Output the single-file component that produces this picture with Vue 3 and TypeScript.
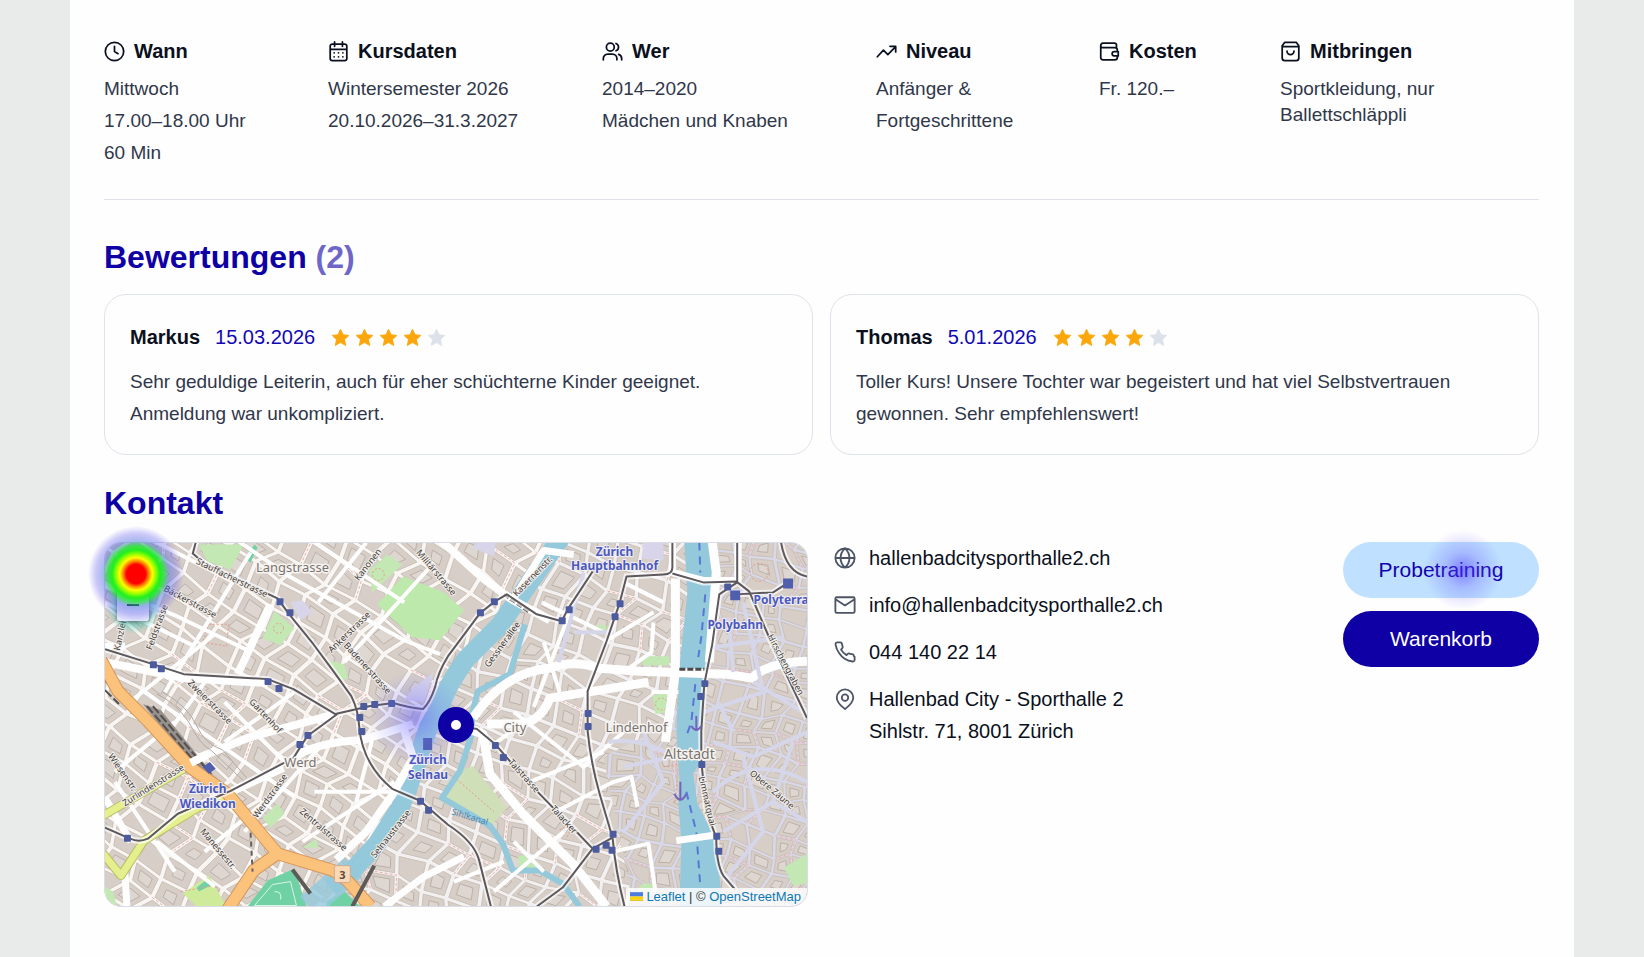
<script setup lang="ts">
interface Fact {
  icon: string
  title: string
  lines: string[]
  compact?: boolean
}

interface Review {
  name: string
  date: string
  stars: number
  text: string
}

interface Label {
  x: number
  y: number
  text: string
  angle?: number
}

const facts: Fact[] = [
  { icon: 'clock', title: 'Wann', lines: ['Mittwoch', '17.00–18.00 Uhr', '60 Min'] },
  { icon: 'calendar', title: 'Kursdaten', lines: ['Wintersemester 2026', '20.10.2026–31.3.2027'] },
  { icon: 'users', title: 'Wer', lines: ['2014–2020', 'Mädchen und Knaben'] },
  { icon: 'trend', title: 'Niveau', lines: ['Anfänger &', 'Fortgeschrittene'] },
  { icon: 'wallet', title: 'Kosten', lines: ['Fr. 120.–'] },
  { icon: 'bag', title: 'Mitbringen', lines: ['Sportkleidung, nur', 'Ballettschläppli'], compact: true },
]

const reviews: Review[] = [
  {
    name: 'Markus',
    date: '15.03.2026',
    stars: 4,
    text: 'Sehr geduldige Leiterin, auch für eher schüchterne Kinder geeignet. Anmeldung war unkompliziert.',
  },
  {
    name: 'Thomas',
    date: '5.01.2026',
    stars: 4,
    text: 'Toller Kurs! Unsere Tochter war begeistert und hat viel Selbstvertrauen gewonnen. Sehr empfehlenswert!',
  },
]

const icons: Record<string, string> = {
  clock: 'M12 1.5a10.5 10.5 0 1 0 0 21a10.5 10.5 0 1 0 0-21M12 6v6l4 2.5',
  calendar:
    'M5 3.5h14a2.5 2.5 0 0 1 2.5 2.5v14a2.5 2.5 0 0 1-2.5 2.5H5a2.5 2.5 0 0 1-2.5-2.5V6A2.5 2.5 0 0 1 5 3.5zM7.5 1v5M16.5 1v5M2.5 9.5h19M7 13.5h.01M12 13.5h.01M17 13.5h.01M7 18h.01M12 18h.01M17 18h.01',
  users:
    'M9.5 2.5a4.500 4.500 0 1 0 0 9a4.500 4.500 0 1 0 0-9M1.500 21.500v-1.500a5 5 0 0 1 5-5h5.500a5 5 0 0 1 5 5v1.500M16 2.800a4.500 4.500 0 0 1 0 8.400M19 15.300a5 5 0 0 1 3.500 4.700v1.500',
  trend: 'M1.5 18l7-7.5 5 5L22.5 6.5M16 6h6.5v6.5',
  wallet:
    'M20 7.5V5a2.5 2.5 0 0 0-2.5-2.5H4.500a2.500 2.500 0 0 0-2.500 2.500v14a2.500 2.500 0 0 0 2.500 2.500H18a3 3 0 0 0 3-3v-1.500M2 5.500a2 2 0 0 0 2 2h14a3 3 0 0 1 3 3v1.500M22 12h-4.500a2.500 2.500 0 0 0 0 5H22z',
  bag: 'M5.5 1.5h13l3 4v14a3 3 0 0 1-3 3h-13a3 3 0 0 1-3-3v-14zM2.5 6.5h19M8 11.5a4 4 0 0 0 8 0',
  globe: 'M12 1.5a10.5 10.5 0 1 0 0 21a10.5 10.5 0 1 0 0-21M12 1.5c-6.5 6-6.5 15 0 21c6.5-6 6.5-15 0-21M1.5 12h21',
  mail: 'M3 3.5h18a1.5 1.5 0 0 1 1.5 1.5v14a1.5 1.5 0 0 1-1.5 1.5H3a1.5 1.5 0 0 1-1.5-1.5V5A1.5 1.5 0 0 1 3 3.5zM2 6l10 6.5L22 6',
  phone:
    'M22.5 17.4v3a2 2 0 0 1-2.2 2a20 20 0 0 1-8.6-3.1a19.5 19.5 0 0 1-6-6A20 20 0 0 1 1.700 3.700a2 2 0 0 1 2-2.200h3a2 2 0 0 1 2 1.700c.1 1 .4 1.900.7 2.800a2 2 0 0 1-.5 2.100L7.700 9.400a16 16 0 0 0 6 6l1.300-1.300a2 2 0 0 1 2.100-.4c.9.300 1.800.6 2.800.7a2 2 0 0 1 1.700 2z',
  pin: 'M21 10.5c0 5.5-6.5 10.5-9 12.5c-2.5-2-9-7-9-12.5a9 9 0 0 1 18 0zM12 7a3.5 3.5 0 1 0 0 7a3.5 3.5 0 1 0 0-7',
}

const contacts: { icon: string; href: string; lines: string[] }[] = [
  { icon: 'globe', href: '#website', lines: ['hallenbadcitysporthalle2.ch'] },
  { icon: 'mail', href: 'mailto:info@hallenbadcitysporthalle2.ch', lines: ['info@hallenbadcitysporthalle2.ch'] },
  { icon: 'phone', href: 'tel:0441402214', lines: ['044 140 22 14'] },
  { icon: 'pin', href: '#karte', lines: ['Hallenbad City - Sporthalle 2', 'Sihlstr. 71, 8001 Zürich'] },
]

/* City blocks: a rotated, jittered grid of quadrilaterals with courtyards. */
interface Quarter {
  clip: string
  street: string
  blocks: string
  yards: string
  lanes: string
}

function quarter(clip: string, street: string, cx: number, cy: number, span: number, angle: number, w: number, h: number, jitter: number, seed: number): Quarter {
  let state = seed
  const rnd = () => {
    state = (state * 16807) % 2147483647
    return state / 2147483647
  }
  const cos = Math.cos((angle * Math.PI) / 180)
  const sin = Math.sin((angle * Math.PI) / 180)
  const cols = Math.ceil((2 * span) / w)
  const rows = Math.ceil((2 * span) / h)
  const grid: number[][][] = []
  for (let r = 0; r <= rows; r++) {
    const line: number[][] = []
    for (let c = 0; c <= cols; c++) {
      const gx = c * w - span + (rnd() - 0.5) * jitter + (r % 3) * w * 0.16
      const gy = r * h - span + (rnd() - 0.5) * jitter
      line.push([cx + gx * cos - gy * sin, cy + gx * sin + gy * cos])
    }
    grid.push(line)
  }
  let blocks = ''
  let yards = ''
  let lanes = ''
  const shrink = (pts: number[][], k: number) => {
    const mx = pts.reduce((s, p) => s + p[0], 0) / 4
    const my = pts.reduce((s, p) => s + p[1], 0) / 4
    return 'M' + pts.map((p) => `${(mx + (p[0] - mx) * k).toFixed(1)} ${(my + (p[1] - my) * k).toFixed(1)}`).join('L') + 'Z'
  }
  for (let r = 0; r < rows; r++) {
    for (let c = 0; c < cols; c++) {
      const pts = [grid[r][c], grid[r][c + 1], grid[r + 1][c + 1], grid[r + 1][c]]
      blocks += shrink(pts, 0.84)
      if (rnd() > 0.2) yards += shrink(pts, 0.34 + rnd() * 0.2)
      if (rnd() > 0.87) lanes += `M${pts[0][0].toFixed(1)} ${pts[0][1].toFixed(1)}L${pts[1][0].toFixed(1)} ${pts[1][1].toFixed(1)}L${pts[2][0].toFixed(1)} ${pts[2][1].toFixed(1)}`
    }
  }
  return { clip, street, blocks, yards, lanes }
}

const quarters: Quarter[] = [
  quarter('west', '#f8f5f3', 180, 180, 330, 34, 31, 24, 8, 71),
  quarter('centre', '#f3f0f2', 480, 180, 260, 22, 28, 25, 9, 133),
  quarter('east', '#d9d8e8', 600, 190, 260, 14, 22, 19, 12, 977),
]

const trams = [
  'M91 0L88 11L101 22L143 42L173 56L184 71L209 102L229 129L247 154Q254 168 255 185Q258 222 288 247L316 259L344 283Q370 300 375 318L387 365',
  'M0 107L48 122L79 132L163 137L189 147L231 172L266 164L289 161Q306 166 319 167Q326 160 331 145Q334 130 344 114L376 71L391 59L403 52L433 72L458 79L464 67L489 29',
  'M233 172L203 194L189 216L126 249L73 272L43 297Q34 301 25 297L0 286',
  'M569 0V25Q569 32 560 32L523 34L516 61L503 99L484 149V189Q487 220 496 252L509 296Q512 330 521 365',
  'M569 31L600 40L633 39L646 49L669 102L704 176M634 0V40L616 52L609 102L601 142L598 189V219L603 269L613 296Q613 322 620 334L632 348M633 52L670 50L684 41M678 0Q683 30 704 34',
  'M352 183L373 187L391 202L426 242L469 286L489 307L459 346L433 365M489 307L509 296',
]

const stops = [
  [175, 59], [185, 70], [48, 122], [56, 126], [163, 139], [174, 146], [203, 193], [195, 202], [259, 164], [270, 162], [287, 161], [255, 175],
  [257, 189], [316, 259], [324, 268], [22, 296], [376, 70], [390, 59], [458, 78], [465, 67], [516, 61], [511, 74], [484, 171], [484, 184],
  [601, 141], [597, 154], [598, 222], [613, 294], [615, 309], [391, 203], [399, 215], [509, 292], [492, 307], [502, 303], [624, 44], [508, 308],
]

const districts: Label[] = [
  { x: 188, y: 30, text: 'Langstrasse' },
  { x: 411, y: 190, text: 'City' },
  { x: 533, y: 190, text: 'Lindenhof' },
  { x: 196, y: 225, text: 'Werd' },
]

const stations: Label[] = [
  { x: 511, y: 14, text: 'Zürich' },
  { x: 511, y: 28, text: 'Hauptbahnhof' },
  { x: 678, y: 62, text: 'Polyterra' },
  { x: 632, y: 87, text: 'Polybahn' },
  { x: 103, y: 251, text: 'Zürich' },
  { x: 103, y: 266, text: 'Wiedikon' },
  { x: 324, y: 222, text: 'Zürich' },
  { x: 324, y: 237, text: 'Selnau' },
]

const streets: Label[] = [
  { x: 126, y: 38, text: 'Stauffacherstrasse', angle: 26 },
  { x: 84, y: 62, text: 'Bäckerstrasse', angle: 28 },
  { x: 55, y: 86, text: 'Feldstrasse', angle: -70 },
  { x: 18, y: 94, text: 'Kanzlei', angle: -78 },
  { x: 266, y: 24, text: 'Kanonen', angle: -52 },
  { x: 330, y: 32, text: 'Militärstrasse', angle: 50 },
  { x: 247, y: 92, text: 'Ankerstrasse', angle: -44 },
  { x: 261, y: 128, text: 'Badenerstrasse', angle: 48 },
  { x: 103, y: 162, text: 'Zweierstrasse', angle: 45 },
  { x: 159, y: 176, text: 'Gartenhof', angle: 47 },
  { x: 15, y: 232, text: 'Wiesenstr.', angle: 55 },
  { x: 50, y: 246, text: 'Zurlindenstrasse', angle: -32 },
  { x: 168, y: 256, text: 'Werdstrasse', angle: -54 },
  { x: 217, y: 290, text: 'Zentralstrasse', angle: 41 },
  { x: 111, y: 309, text: 'Manessestr.', angle: 50 },
  { x: 289, y: 294, text: 'Selnaustrasse', angle: -52 },
  { x: 401, y: 104, text: 'Gessnerallee', angle: -54 },
  { x: 431, y: 36, text: 'Kasernenstr.', angle: -46 },
  { x: 418, y: 236, text: 'Talstrasse', angle: 48 },
  { x: 458, y: 280, text: 'Talacker', angle: 48 },
  { x: 680, y: 124, text: 'Hirschengraben', angle: 62 },
  { x: 601, y: 260, text: 'Limmatquai', angle: 77 },
  { x: 667, y: 250, text: 'Obere Zäune', angle: 40 },
]
</script>

<template>
  <div class="page">
    <main class="sheet">
      <section class="facts" aria-label="Kursinformationen">
        <article v-for="fact in facts" :key="fact.title" class="fact">
          <h3 class="fact-title">
            <svg class="icon" viewBox="0 0 24 24" aria-hidden="true"><path :d="icons[fact.icon]" /></svg>
            {{ fact.title }}
          </h3>
          <div :class="['fact-body', { compact: fact.compact }]">
            <div v-for="line in fact.lines" :key="line">{{ line }}</div>
          </div>
        </article>
      </section>

      <section class="reviews">
        <h2>Bewertungen <span class="count">(2)</span></h2>
        <div class="cards">
          <article v-for="review in reviews" :key="review.name" class="card">
            <header class="card-head">
              <strong>{{ review.name }}</strong>
              <time>{{ review.date }}</time>
              <span class="stars" role="img" :aria-label="`${review.stars} von 5 Sternen`">
                <svg v-for="n in 5" :key="n" :class="['star', { off: n > review.stars }]" viewBox="0 0 24 24">
                  <path d="M12 2.5l2.900 6.300 6.700.8-5 4.700 1.400 6.900L12 17.800 6 21.200l1.400-6.900-5-4.700 6.700-.8z" />
                </svg>
              </span>
            </header>
            <p>{{ review.text }}</p>
          </article>
        </div>
      </section>

      <section class="contact">
        <h2>Kontakt</h2>
        <div class="contact-grid">
          <div id="karte" class="map">
            <div class="map-clip">
              <svg class="map-art" viewBox="0 0 704 365" preserveAspectRatio="xMidYMid slice" role="img" aria-label="Karte von Zürich">
                <defs>
                  <clipPath id="west"><path d="M0 0H455L336 165L300 270L210 365H0Z" /></clipPath>
                  <clipPath id="centre"><path d="M455 0H595V365H210L300 270L336 165Z" /></clipPath>
                  <clipPath id="east"><path d="M500 215L570 180L595 0H704V365H530Z" /></clipPath>
                </defs>

                <g v-for="q in quarters" :key="q.clip" :clip-path="`url(#${q.clip})`">
                  <rect width="704" height="365" :fill="q.street" />
                  <path :d="q.blocks" fill="#d6cec7" stroke="#cbc1b8" stroke-width="1" />
                  <path :d="q.yards" fill="#ded7d1" stroke="#bcb1a8" stroke-width="1" />
                  <path :d="q.lanes" fill="none" stroke="#f0aea6" stroke-width="1" stroke-dasharray="3 2" />
                </g>

                <g fill="#c3e8b4">
                  <path d="M94 2H139L126 27L103 19ZM265 28L283 12L298 22L268 50ZM158 96L170 69L190 86L176 103ZM158 276L173 262L180 272L166 286Z" />
                  <path d="M273 62L299 34L340 50L360 68L336 98L308 95Z" fill="#bde9ad" />
                  <path d="M356 229L369 224L403 266L389 282L336 259Z" fill="#cfe0b8" />
                  <path d="M681 326L704 312V342L690 344ZM539 114H566V123H539ZM491 83H503V91H491ZM549 154L563 150L566 170L552 172ZM224 118L240 122L244 136L236 138ZM198 306L212 297L214 306ZM414 315L424 312L438 328L416 328Z" />
                  <path d="M78 352L104 334L122 365H92Z" fill="#cdeb9a" />
                  <path d="M0 345L8 350L12 365H0ZM540 342H552V350H532Z" />
                </g>
                <path d="M143 365L163 339L190 327L202 365ZM222 360L240 350L256 365H222ZM150 2L140 16L146 20L153 5ZM92 346L102 338L106 344L94 350Z" fill="#6fd1a4" />
                <path d="M150 364L168 343L186 340L192 364ZM170 350Q178 350 176 358" fill="none" stroke="#d8f5e6" stroke-width="1" />
                <path d="M186 60L198 58L208 70L196 78ZM368 5L376 -2H392L390 14ZM540 0H560V18L538 16ZM310 145L330 130L320 160L300 158Z" fill="#d8d5ea" />
                <g fill="none" stroke="#e8998d" stroke-dasharray="2 2">
                  <circle cx="274" cy="32" r="6" /><circle cx="174" cy="86" r="5" /><circle cx="656" cy="30" r="9" /><circle cx="558" cy="162" r="6" />
                  <path d="M104 82L124 82L122 104L98 100ZM76 350L110 344L116 352M560 225L575 222L572 260M456 288L470 282L462 298M350 235L390 270" />
                </g>

                <g class="river">
                  <path d="M458 -6L419 50L396 83L362 117Q342 145 336 165L324 186L309 232L296 266L273 302L249 328L226 346" stroke-width="19" />
                  <path d="M249 326L204 365" stroke-width="26" opacity="0.8" />
                  <path d="M421 82L406 132L374 149L368 172V192L356 229L338 256L386 284L399 302L409 329H436L459 342L476 365" stroke-width="6" />
                  <path d="M581 0H609V34L608 60L603 126L598 189V219L590 232L594 262L606 285L614 310L619 365H576L578 300L575 262L576 236L573 189L576 126L584 50Z" class="lake" />
                </g>
                <path d="M596 0L597 30M602 52L598 95L595 115M592 142L588 180L583 194M583 250L593 290L597 345" fill="none" stroke="#5876d6" stroke-width="2" stroke-dasharray="8 6" />

                <g class="roads">
                  <path d="M-4 42L70 73L143 108M44 -4L130 40M130 -4L185 34L300 98L336 112M20 164L110 92M60 150L146 10M0 60L90 104M208 -2L300 60M262 0L214 60M240 120L330 20M100 140L64 190M40 150L190 255M120 200L190 150M10 240L70 330M52 300L110 345M70 180L10 230M140 290L220 200M198 300L290 240M210 250L290 250M120 160L180 220M270 190L252 260M100 310L160 260" stroke-width="4" />
                  <path d="M438 60L500 90M430 165L470 60M456 150L440 100M410 170L480 225L520 190M380 210L420 180M426 240L500 210M452 270L510 240L528 235L534 265M390 350L460 290M510 310L545 302L552 350M410 300L440 330M350 340L400 320M550 80L548 110L520 130M500 100L550 70M520 40L560 60M548 150H575" stroke-width="4" />
                  <path d="M166 62L133 132M86 219L143 196L231 172M0 120L79 136L163 141M188 217Q210 200 259 198L309 182M300 188L309 216L289 252L262 290L232 318M326 -12L379 36L406 56L446 78M179 226L126 250L73 274" stroke-width="8" />
                  <path d="M369 176Q400 130 446 126Q469 117 496 126L536 129L623 132L649 136Q665 120 704 119M383 182H420Q440 175 446 156L503 147L545 140" stroke-width="9" />
                  <path d="M352 183L379 192L386 232L419 272L469 322L503 365M572 36V130L562 200M609 0L613 30L606 120" stroke-width="9" />
                  <path d="M569 0V30L600 38H635V0M573 299L614 293M0 104L20 104M409 57L440 8L470 12M280 365L320 335L360 315M20 332L22 365M0 256L26 300" stroke-width="7" />
                </g>
                <path d="M505 200Q540 195 570 215M520 225L570 215M540 190L560 240L520 290M610 200L650 215L704 190M610 250Q650 210 704 240M620 290L670 260L704 280M640 215L660 290L620 340M640 60L660 150L600 170M610 105L680 95M625 75L630 130M650 140L700 170M615 160L630 190M690 200L670 260M470 90H510M480 30L455 120" fill="none" stroke="#d6d6ea" stroke-width="4" />

                <path d="M38 162L56 168L108 232L100 240Z" fill="#95908c" />
                <path d="M42 164L102 234M48 164L106 232M0 148L14 162M0 138L10 150" fill="none" stroke="#55504d" stroke-width="2" stroke-dasharray="9 3" />
                <path d="M52 152Q70 160 84 180Q96 204 106 208L140 240M58 150Q84 165 92 184Q100 202 118 208L142 236" fill="none" stroke="#b1aba8" />
                <g class="yellow-road">
                  <path d="M-2 274L79 227M-2 312L16 334L39 299L93 266L126 256" stroke="#b8bf66" stroke-width="9" />
                  <path d="M-2 274L79 227M-2 312L16 334L39 299L93 266L126 256" stroke="#e6ef8d" stroke-width="7" />
                </g>
                <g class="orange-road">
                  <path d="M-4 118L13 149L43 179L86 226L123 252L173 312L229 329L243 339L266 365M173 312L149 329L123 368" stroke="#d5955a" stroke-width="13" />
                  <path d="M-4 118L13 149L43 179L86 226L123 252L173 312L229 329L243 339L266 365M173 312L149 329L123 368" stroke="#fbc27c" stroke-width="11" />
                </g>
                <path d="M86 221L102 213" stroke="#ffffff" stroke-width="8" />
                <path d="M146 291L148 330" stroke="#66605d" stroke-width="2" stroke-dasharray="5 4" />
                <path d="M188 328L206 352M270 324L248 365" stroke="#5f5a57" stroke-width="4" fill="none" />
                <path d="M400 52L426 70M576 127H602" stroke="#4e4a49" stroke-width="3" stroke-dasharray="6 2" fill="none" />

                <g class="tram-casing"><path v-for="d in trams" :key="d" :d="d" /></g>
                <g class="tram"><path v-for="d in trams" :key="d" :d="d" /></g>
                <rect v-for="([x, y], i) in stops" :key="i" :x="x - 3" :y="y - 3" width="7" height="7" rx="1" fill="#4c5a9e" />
                <path d="M627 48h10v10h-10zM680 36h10v10h-10zM319 196h9v12h-9zM98 225l7-5 6 7-7 5z" fill="#4f5fae" />
                <g fill="none" stroke="#7464b8" stroke-width="2">
                  <path d="M577 240V258M571 252Q577 264 583 252M593 174V188M588 184Q593 192 598 184" />
                </g>

                <text v-for="s in streets" :key="s.text" class="street" :transform="`translate(${s.x} ${s.y}) rotate(${s.angle})`">{{ s.text }}</text>
                <text x="365" y="278" class="canal-name" transform="rotate(17 365 278)">Sihlkanal</text>
                <text v-for="l in districts" :key="l.text" class="district" :x="l.x" :y="l.y">{{ l.text }}</text>
                <text class="district big" x="586" y="217">Altstadt</text>
                <text v-for="(l, i) in stations" :key="i" class="station" :x="l.x" :y="l.y">{{ l.text }}</text>
                <rect x="230" y="324" width="16" height="17" rx="2" fill="#f9d9b8" stroke="#c9ab90" />
                <text x="238" y="337" class="shield">3</text>
              </svg>
              <div class="attribution">
                <svg class="flag" viewBox="0 0 12 8" aria-hidden="true"><path fill="#4c7be1" d="M0 0h12v4H0z" /><path fill="#ffd500" d="M0 4h12v3H0z" /><path fill="#e0bc00" d="M0 7h12v1H0z" /></svg>
                <a href="#leaflet">Leaflet</a> | © <a href="#osm">OpenStreetMap</a>
              </div>
            </div>
            <span class="heat trail"></span>
            <span class="heat tail"></span>
            <div class="zoom">
              <button type="button" aria-label="Vergrössern"><svg viewBox="0 0 12 12"><path d="M0 6h12M6 0v12" /></svg></button>
              <button type="button" aria-label="Verkleinern"><svg viewBox="0 0 12 12"><path d="M0 6h12" /></svg></button>
            </div>
            <span class="heat hot"></span>
            <span class="marker"></span>
          </div>

          <address class="details">
            <a v-for="item in contacts" :key="item.icon" :href="item.href" class="detail">
              <svg class="icon" viewBox="0 0 24 24" aria-hidden="true"><path :d="icons[item.icon]" /></svg>
              <span><span v-for="line in item.lines" :key="line" class="detail-line">{{ line }}</span></span>
            </a>
          </address>

          <div class="actions">
            <button type="button" class="btn light">Probetraining<span class="heat soft"></span></button>
            <button type="button" class="btn dark">Warenkorb</button>
          </div>
        </div>
      </section>
    </main>
  </div>
</template>

<style>
body {
  margin: 0;
}
</style>

<style scoped>
.page {
  box-sizing: border-box;
  min-height: 100vh;
  padding: 0 70px;
  display: flex;
  background: #e9eaea;
  color: #0b1020;
  font-family: "Liberation Sans", Arial, sans-serif;
  font-size: 20px;
  line-height: 32px;
}

.sheet {
  flex: 1;
  min-width: 0;
  padding: 35px 35px 0 34px;
  background: #fefefe;
}

.icon {
  flex: none;
  width: 21px;
  height: 21px;
  fill: none;
  stroke: currentColor;
  stroke-width: 2;
  stroke-linecap: round;
  stroke-linejoin: round;
}

.facts {
  display: grid;
  grid-template-columns: 224fr 274fr 274fr 223fr 181fr 259fr;
  padding-bottom: 30px;
  border-bottom: 1px solid #dfe2ec;
}

.fact-title {
  display: flex;
  align-items: center;
  gap: 9px;
  margin: 0 0 6px;
  font-size: 20px;
  font-weight: 700;
}

.fact-body {
  color: #30374a;
  font-size: 19px;
}

.compact {
  padding-top: 3px;
  line-height: 26px;
}

h2 {
  margin: 0;
  color: #0f00a5;
  font-size: 32px;
  line-height: 40px;
  font-weight: 700;
}

.reviews {
  padding-top: 37px;
}

.count {
  color: #6f66c9;
}

.cards {
  display: grid;
  grid-template-columns: 1fr 1fr;
  gap: 17px;
  margin-top: 17px;
}

.card {
  padding: 26px 25px 24px;
  border: 1px solid #dfe3ec;
  border-radius: 22px;
}

.card-head {
  display: flex;
  align-items: center;
  gap: 15px;
}

time {
  color: #1208b4;
}

.stars {
  display: flex;
  gap: 3px;
}

.star {
  width: 21px;
  height: 21px;
  fill: #fba70c;
  stroke: #fba70c;
  stroke-width: 1;
  stroke-linejoin: round;
}

.star.off {
  fill: #dde1ea;
  stroke: #dde1ea;
}

.card p {
  margin: 13px 0 0;
  color: #30374a;
  font-size: 19px;
}

.contact {
  padding: 28px 0 40px;
}

.contact-grid {
  display: grid;
  grid-template-columns: 704fr 483fr 196px;
  gap: 26px;
  margin-top: 19px;
}

.map {
  position: relative;
  height: 365px;
}

.map-clip {
  position: relative;
  box-sizing: border-box;
  height: 100%;
  overflow: hidden;
  border: 1px solid #d8dde8;
  border-radius: 17px;
}

.map-art {
  display: block;
  width: 100%;
  height: 100%;
}

.river path {
  fill: none;
  stroke: #94c9dc;
  stroke-linejoin: round;
}

.river .lake {
  fill: #94c9dc;
  stroke: none;
}

.roads path {
  fill: none;
  stroke: #fefefe;
  stroke-linejoin: round;
}

.yellow-road path,
.orange-road path {
  fill: none;
  stroke-linejoin: round;
}

.tram-casing path {
  fill: none;
  stroke: #ffffff;
  stroke-width: 6;
  opacity: 0.7;
}

.tram path {
  fill: none;
  stroke: #5d585c;
  stroke-width: 2;
  stroke-linejoin: round;
}

.map-art text {
  text-anchor: middle;
  font-family: "Noto Sans", "Open Sans", sans-serif;
  paint-order: stroke;
  stroke-linejoin: round;
}

.street {
  fill: #3f3b39;
  stroke: #f4f0ec;
  stroke-width: 2;
  font-size: 9px;
}

.canal-name {
  fill: #4b87ad;
  font-size: 9px;
}

.district {
  fill: #77736f;
  stroke: #f7f4f1;
  stroke-width: 3;
  font-size: 13px;
}

.district.big {
  font-size: 14px;
}

.station {
  fill: #4c58bd;
  stroke: #f1f0f6;
  stroke-width: 2;
  font-size: 12px;
  font-weight: 700;
}

.shield {
  fill: #5b4a3c;
  font-size: 11px;
  font-weight: 700;
}

.attribution {
  position: absolute;
  right: 0;
  bottom: 0;
  padding: 0 6px 0 4px;
  background: rgba(255, 255, 255, 0.82);
  color: #333333;
  font-size: 13px;
  line-height: 18px;
}

.attribution a {
  color: #0b78b5;
  text-decoration: none;
}

.flag {
  width: 13px;
  height: 9px;
  margin-right: 3px;
}

.zoom {
  position: absolute;
  top: 15px;
  left: 13px;
  width: 32px;
  overflow: hidden;
  border-radius: 3px;
  box-shadow: 0 1px 4px rgba(0, 0, 0, 0.45);
}

.zoom button {
  display: flex;
  align-items: center;
  justify-content: center;
  width: 32px;
  height: 31px;
  padding: 0;
  border: 0;
  background: #e6e8fb;
}

.zoom button + button {
  height: 33px;
  border-top: 1px solid #cccccc;
}

.zoom svg {
  width: 12px;
  height: 12px;
  stroke: #1c2540;
  stroke-width: 2;
}

.marker {
  position: absolute;
  top: 50%;
  left: 50%;
  width: 10px;
  height: 10px;
  border: 13px solid #0f00a5;
  border-radius: 50%;
  background: #ffffff;
  transform: translate(-50%, -50%);
}

.heat {
  position: absolute;
  border-radius: 50%;
  pointer-events: none;
}

.hot {
  top: -16px;
  left: -16px;
  width: 96px;
  height: 96px;
  background: radial-gradient(circle closest-side, #ff0000 0 20%, #ff8a00 27%, #ffff00 34%, #9dff00 41%, #1ff01f 50%, rgba(28, 225, 50, 0.8) 58%, rgba(65, 100, 225, 0.45) 69%, rgba(85, 75, 235, 0.3) 84%, rgba(90, 80, 245, 0) 100%);
}

.tail {
  top: 36px;
  left: 2px;
  width: 56px;
  height: 56px;
  background: radial-gradient(circle closest-side, rgba(100, 110, 245, 0.35), rgba(40, 205, 180, 0.4) 65%, rgba(60, 215, 210, 0));
}

.trail {
  top: 128px;
  left: 264px;
  width: 96px;
  height: 96px;
  background: radial-gradient(circle closest-side, rgba(95, 90, 255, 0.5), rgba(110, 105, 255, 0.22) 50%, rgba(110, 105, 255, 0));
}

.soft {
  top: -12px;
  right: 36px;
  width: 80px;
  height: 80px;
  background: radial-gradient(circle closest-side, rgba(75, 50, 255, 0.55), rgba(95, 80, 255, 0.26) 45%, rgba(100, 90, 255, 0));
}

.details {
  display: flex;
  flex-direction: column;
  align-items: flex-start;
  gap: 15px;
  font-style: normal;
}

.detail {
  display: flex;
  gap: 13px;
  color: #0b1020;
  text-decoration: none;
}

.detail .icon {
  width: 22px;
  height: 22px;
  margin-top: 5px;
  color: #4c5466;
}

.detail-line {
  display: block;
}

.actions {
  display: flex;
  flex-direction: column;
  gap: 13px;
}

.btn {
  position: relative;
  height: 56px;
  padding: 0;
  border: 0;
  border-radius: 28px;
  font: inherit;
  font-size: 21px;
}

.light {
  background: #bfe1ff;
  color: #1200ae;
}

.dark {
  background: #0f00a5;
  color: #ffffff;
}
</style>
